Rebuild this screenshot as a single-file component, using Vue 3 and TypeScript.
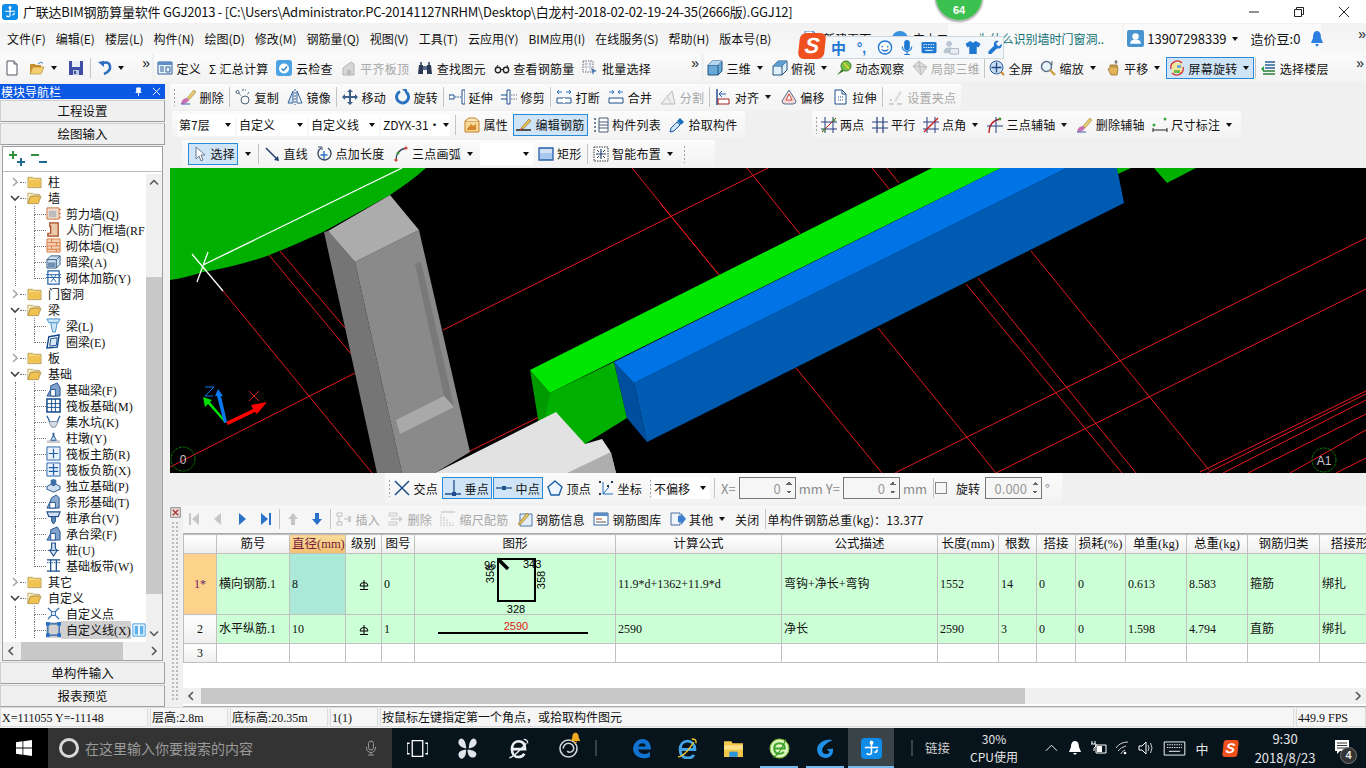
<template>
  <div class="app">
    <!-- icon sprite -->
    <svg class="sprite" width="0" height="0">
      <symbol id="new" viewBox="0 0 16 16"><path d="M3 1h7l3 3v11H3z" fill="#fff" stroke="#556"/><path d="M10 1v3h3" fill="#dde" stroke="#556"/></symbol>
      <symbol id="open" viewBox="0 0 16 16"><path d="M1 14V4h5l1 1h5v2H4l-3 7z" fill="#c9902f"/><path d="M1 14l3-7h11l-3 7z" fill="#f3cf72" stroke="#b07f22" stroke-width=".6"/><path d="M9 4q2-3 5-1" fill="none" stroke="#2f7fc8"/></symbol>
      <symbol id="save" viewBox="0 0 16 16"><path d="M1 1h14v14H1z" fill="#3d4fa6"/><path d="M4 1h8v6H4z" fill="#e8edf8"/><path d="M5 10h6v5H5z" fill="#bcc6e4"/><path d="M6 11h2v3H6z" fill="#3d4fa6"/></symbol>
      <symbol id="undo" viewBox="0 0 16 16"><path d="M5 3q7-2 8 3t-6 8" fill="none" stroke="#2a6fc0" stroke-width="2.6"/><path d="M1 2l6-1v6z" fill="#2a6fc0"/></symbol>
      <symbol id="def" viewBox="0 0 16 16"><path d="M1 2h14v12H1z" fill="#eef4fb" stroke="#2d5f99"/><path d="M1 2h14v3H1z" fill="#5b8ec6"/><path d="M3 7h4M3 9h4M3 11h4M9 7h4v5H9z" fill="none" stroke="#2d5f99"/></symbol>
      <symbol id="cloud" viewBox="0 0 16 16"><rect x="0" y="0" width="16" height="16" rx="3" fill="#4ba3e3"/><circle cx="8" cy="8.5" r="5" fill="#fff"/><path d="M5.5 8.5l2 2 3.500-4" fill="none" stroke="#2f86c9" stroke-width="1.500"/></symbol>
      <symbol id="level" viewBox="0 0 16 16"><path d="M2 15V8l8-6 3 2v11z" fill="#d6d6d6" stroke="#b5b5b5"/><path d="M6 15v-5h4v5z" fill="#bcbcbc"/></symbol>
      <symbol id="find" viewBox="0 0 16 16"><path d="M2 5h4v9H1zM10 5h4l1 9h-5z" fill="#2e3b55"/><path d="M3 2h2v3H3zM11 2h2v3h-2zM6 6h4v4H6z" fill="#5a6b8c"/></symbol>
      <symbol id="glass" viewBox="0 0 16 16"><circle cx="4" cy="10" r="2.700" fill="none" stroke="#222" stroke-width="1.400"/><circle cx="12" cy="10" r="2.700" fill="none" stroke="#222" stroke-width="1.400"/><path d="M6.500 9.500h3M2 8l2-3M14 8l-1-3" stroke="#222" fill="none"/></symbol>
      <symbol id="batch" viewBox="0 0 16 16"><path d="M1 1h10v11H1z" fill="#fff" stroke="#667" stroke-dasharray="1.500 1"/><path d="M1 4h10M1 7h10M4 1v11M8 1v11" stroke="#99a" stroke-width=".6"/><path d="M9 8l6 3-3 1-1 3z" fill="#4a78b0"/></symbol>
      <symbol id="cube" viewBox="0 0 16 16"><path d="M1 5l4-4h10v10l-4 4H1z" fill="#6aaad8" stroke="#23527f"/><path d="M1 5h10v10M11 5l4-4" fill="none" stroke="#23527f"/><path d="M1 5l4-4h10l-4 4z" fill="#b5d7ef"/></symbol>
      <symbol id="top" viewBox="0 0 16 16"><path d="M1 15V6l5-5h9v9l-5 5z" fill="#dff0fa" stroke="#23527f"/><path d="M1 6h9v9M10 6l5-5" fill="none" stroke="#23527f"/><path d="M6 1h9l-5 5H1z" fill="#5b9ed0"/></symbol>
      <symbol id="orbit" viewBox="0 0 16 16"><path d="M1 15l5-6 2 2z" fill="#3a7a2c"/><circle cx="10" cy="6" r="5" fill="#7cc143" stroke="#3a7a2c"/><path d="M8 3l5 6" stroke="#e6d23a" stroke-width="1.500"/></symbol>
      <symbol id="local" viewBox="0 0 16 16"><path d="M1 6l6-5 8 6-6 8z" fill="#dcdcdc" stroke="#bdbdbd"/><path d="M7 1l2 14M1 6l14 1" stroke="#bdbdbd"/></symbol>
      <symbol id="full" viewBox="0 0 16 16"><circle cx="7.500" cy="7.500" r="6.500" fill="#c9dcf2" stroke="#2d5f99"/><path d="M7.500 2.500v10M2.500 7.500h10" stroke="#1e4a85" stroke-width="1.300"/><path d="M12 12l3 3" stroke="#c98a2c" stroke-width="2"/></symbol>
      <symbol id="zoom" viewBox="0 0 16 16"><circle cx="6.500" cy="6.500" r="5" fill="#e9f3fb" stroke="#5c6f87" stroke-width="1.500"/><path d="M10 10l5 5" stroke="#c9a03c" stroke-width="2.400"/><path d="M12 1v4" stroke="#555"/></symbol>
      <symbol id="pan" viewBox="0 0 16 16"><path d="M3 9l2-1V5h7l1 4-1 6H6z" fill="#e2b35c" stroke="#94702c" stroke-width=".8"/><path d="M7 5v3M9 5v3M11 5v3" stroke="#94702c" stroke-width=".7"/><path d="M11 0v4M9.500 2h3" stroke="#556"/></symbol>
      <symbol id="rotate" viewBox="0 0 16 16"><path d="M3 3h10v10H3z" fill="#f2e69a"/><path d="M5 10h6v3H5z" fill="#71b84d"/><path d="M8 5h4v3H8z" fill="#6fa9dc"/><path d="M2 9a6.500 6.500 0 0 1 11-6M14 7a6.500 6.500 0 0 1-11 6" fill="none" stroke="#d6322c" stroke-width="1.300"/></symbol>
      <symbol id="floors" viewBox="0 0 16 16"><path d="M5 2h10M5 5h10M5 8h10" stroke="#2d5f99" stroke-width="1.400"/><path d="M3 11h12M3 14h12" stroke="#2d7f3a" stroke-width="1.400"/><path d="M1 9l3-3v6z" fill="#2e9c45"/></symbol>
      <symbol id="erase" viewBox="0 0 16 16"><path d="M7 9l7-8 2 2-7 8z" fill="#e7cb6d" stroke="#97803a" stroke-width=".6"/><path d="M1 15q1-6 6-6l2 2q-2 4-8 4z" fill="#cc6fb2"/><path d="M1 15h9" stroke="#3b5da8"/></symbol>
      <symbol id="copy" viewBox="0 0 16 16"><circle cx="2.500" cy="3" r="1.500" fill="none" stroke="#4c5f78"/><circle cx="10" cy="11" r="4" fill="none" stroke="#4c5f78"/><path d="M4 4l2 3M7 1h4M14 3l-2 3" stroke="#4c5f78" stroke-dasharray="2 1"/></symbol>
      <symbol id="mirror" viewBox="0 0 16 16"><path d="M6 2v12H1z" fill="#d8e5f3" stroke="#2d5f99"/><path d="M10 2v12h5z" fill="#fff" stroke="#2d5f99"/><path d="M8 0v16" stroke="#2d5f99" stroke-dasharray="2 1"/></symbol>
      <symbol id="move" viewBox="0 0 16 16"><path d="M8 0l3 3H9v4h4V5l3 3-3 3V9H9v4h2l-3 3-3-3h2V9H3v2L0 8l3-3v2h4V3H5z" fill="#3c5f8a"/></symbol>
      <symbol id="spin" viewBox="0 0 16 16"><path d="M6 2.500a6 6 0 1 0 6 .5" fill="none" stroke="#2d72c2" stroke-width="3"/><path d="M8 0h5v5z" fill="#2d72c2"/></symbol>
      <symbol id="extend" viewBox="0 0 16 16"><path d="M13 1h3v14h-3z" fill="#fff" stroke="#1f4f8c"/><path d="M0 6h5v4H0z" fill="#fff" stroke="#1f4f8c"/><path d="M6 8h6" stroke="#1f4f8c" stroke-dasharray="1.500 1"/></symbol>
      <symbol id="trim" viewBox="0 0 16 16"><path d="M6 1h3v14H6z" fill="#fff" stroke="#1f4f8c"/><path d="M0 6h6M0 10h6" stroke="#1f4f8c"/><path d="M10 6h6M10 10h6" stroke="#6a7a90" stroke-dasharray="1.500 1"/></symbol>
      <symbol id="break" viewBox="0 0 16 16"><path d="M1 9h14v5H1z" fill="#fff" stroke="#1f4f8c"/><path d="M8 9v5" stroke="#fff" stroke-width="2"/><path d="M1 3h5M15 3h-5M1 3l2-2M1 3l2 2M15 3l-2-2M15 3l-2 2" stroke="#2d72c2" fill="none"/></symbol>
      <symbol id="merge" viewBox="0 0 16 16"><path d="M1 9h14v5H1z" fill="#fff" stroke="#1f4f8c"/><path d="M1 3h5M15 3h-5M6 3L4 1M6 3L4 5M10 3l2-2M10 3l2 2" stroke="#2d72c2" fill="none"/></symbol>
      <symbol id="split" viewBox="0 0 16 16"><path d="M1 15L12 2l3 13z" fill="#eee" stroke="#bbb"/><path d="M7 6l4 9" stroke="#ccc"/></symbol>
      <symbol id="align" viewBox="0 0 16 16"><path d="M2 0v16" stroke="#1f3f8c" stroke-width="1.400"/><path d="M3 10h11v5H3z" fill="#fff" stroke="#a02020"/><path d="M11 5H4M4 5l3-3M4 5l3 3" stroke="#1f5fa8" fill="none"/></symbol>
      <symbol id="offset" viewBox="0 0 16 16"><path d="M8 1l7 11q0 3-3 3H4q-3 0-3-3z" fill="#f7d7d2" stroke="#56729a"/><path d="M8 5l3 6H5z" fill="#fff" stroke="#c9473a"/></symbol>
      <symbol id="stretch" viewBox="0 0 16 16"><path d="M2 1h7l4 4v10H2z" fill="#fff" stroke="#1f4f8c"/><path d="M9 1v4h4" fill="none" stroke="#1f4f8c"/><path d="M5 8h5M5 11h5" stroke="#1f4f8c" stroke-dasharray="1 1"/></symbol>
      <symbol id="grips" viewBox="0 0 16 16"><path d="M6 12l6-10 2 1-6 10z" fill="#ddd"/><path d="M1 15h5M9 15h5M2 11h2" stroke="#c4c4c4" stroke-width="1.500"/></symbol>
      <symbol id="prop" viewBox="0 0 16 16"><path d="M1 4h14v11H1z" fill="#f5d99a" stroke="#c77f1e"/><path d="M3 12l4-5 2 2 3-2v6H3z" fill="#d8862a"/><path d="M1 4l4-3h6l4 3" fill="#fbe9c3" stroke="#c77f1e"/></symbol>
      <symbol id="edit" viewBox="0 0 16 16"><path d="M0 13h15" stroke="#222" stroke-width="1.500"/><path d="M5 11L13 2l2 2-8 8z" fill="#e5c25c" stroke="#8a6a1f" stroke-width=".6"/><path d="M5 11l-1 2 3-1z" fill="#c33"/></symbol>
      <symbol id="list" viewBox="0 0 16 16"><path d="M1 2h2M1 6h2M1 10h2M1 14h2" stroke="#4b5d78" stroke-width="1.600" stroke-dasharray="2 1"/><path d="M6 1h9v14H6z" fill="#fff" stroke="#4b5d78"/><path d="M6 5h9M6 8h9M6 11h9" stroke="#4b5d78"/></symbol>
      <symbol id="pick" viewBox="0 0 16 16"><path d="M1 15l1-4 6-6 3 3-6 6z" fill="#cfe3f5" stroke="#1d5ca0"/><path d="M8 4l3-3 4 4-3 3z" fill="#1d6fc0"/></symbol>
      <symbol id="two" viewBox="0 0 16 16"><path d="M4 0v16M12 0v16M0 5h16M0 12h16" stroke="#273f7f" fill="none"/><path d="M1 15L15 1" stroke="#b02020"/><circle cx="3" cy="13" r="1.500" fill="#4c9a3a"/><circle cx="13" cy="3" r="1.500" fill="#4c9a3a"/></symbol>
      <symbol id="par" viewBox="0 0 16 16"><path d="M5 0v16M11 0v16M0 5h16M0 11h16" stroke="#273f7f" fill="none" stroke-width="1.200"/></symbol>
      <symbol id="ang" viewBox="0 0 16 16"><path d="M4 0v16M12 0v16M0 5h16M0 12h16" stroke="#273f7f" fill="none"/><path d="M1 15L15 1" stroke="#d02020" stroke-width="1.500"/></symbol>
      <symbol id="arcx" viewBox="0 0 16 16"><path d="M2 16Q2 4 13 2" fill="none" stroke="#c02020" stroke-width="1.300"/><path d="M9 0v16M0 9h16" stroke="#273f7f" fill="none"/><circle cx="13" cy="2" r="1.400" fill="#3a9a3a"/></symbol>
      <symbol id="dim" viewBox="0 0 16 16"><path d="M1 11v4M15 11v4M1 13h14" stroke="#222" fill="none"/><circle cx="2" cy="8" r="1.500" fill="#3aa63a"/><circle cx="13" cy="2" r="1.500" fill="#3aa63a"/></symbol>
      <symbol id="cursor" viewBox="0 0 16 16"><path d="M5 1v12l3-3 2 5 2-1-2-5h4z" fill="#fff" stroke="#6b7a90"/></symbol>
      <symbol id="line" viewBox="0 0 16 16"><path d="M2 2l11 11" stroke="#233f6f" stroke-width="1.500"/><path d="M15 15l-5-1 4-4z" fill="#233f6f"/></symbol>
      <symbol id="plen" viewBox="0 0 16 16"><path d="M5 2a6.500 6.500 0 1 0 7 0" fill="none" stroke="#3e4f68" stroke-width="1.400"/><path d="M8 5v8M4.500 9h7" stroke="#2d72c2" stroke-width="1.400"/><path d="M2 1h4v3" fill="none" stroke="#3e4f68"/></symbol>
      <symbol id="arc" viewBox="0 0 16 16"><path d="M3 14Q3 4 13 2" fill="none" stroke="#39435a" stroke-width="1.300"/><circle cx="3" cy="14" r="1.600" fill="#d0473a"/><circle cx="5" cy="7" r="1.500" fill="#3a9a3a"/><circle cx="13" cy="2" r="1.600" fill="#d0473a"/></symbol>
      <symbol id="rect" viewBox="0 0 16 16"><path d="M1 2h14v12H1z" fill="#a9c8ee" stroke="#2d5faa" stroke-width="1.300"/><path d="M2 3h12v4H2z" fill="#d2e3f7"/></symbol>
      <symbol id="smart" viewBox="0 0 16 16"><path d="M1 1h14v14H1z" fill="#fff" stroke="#333" stroke-dasharray="1.500 1"/><path d="M8 3v10M3 8h10" stroke="#233f6f" stroke-width="1.200"/><path d="M4 4l2 2M12 4l-2 2M4 12l2-2M12 12l-2-2" stroke="#333"/></symbol>
      <symbol id="cross" viewBox="0 0 16 16"><path d="M1 1l14 14M15 1L1 15" stroke="#1f4f8c" stroke-width="1.500"/></symbol>
      <symbol id="perp" viewBox="0 0 16 16"><path d="M9 0v14M0 14h16" stroke="#1f4f8c" stroke-width="1.300"/><path d="M7 12h4v4H7z" fill="#1f4f8c"/></symbol>
      <symbol id="mid" viewBox="0 0 16 16"><path d="M0 8h16" stroke="#1f4f8c" stroke-width="1.300"/><path d="M6 6h4v4H6z" fill="#1f4f8c"/></symbol>
      <symbol id="vertex" viewBox="0 0 16 16"><path d="M8 1l7 6-3 8H4L1 7z" fill="#eef6ff" stroke="#1f5fa8" stroke-width="1.400"/></symbol>
      <symbol id="coord" viewBox="0 0 16 16"><path d="M5 2v12h10M5 14l6-7" stroke="#1f6fc0" fill="none"/><path d="M1 1h2v2H1zM13 1h2v2h-2zM1 13h2v2H1zM9 5h2v2H9z" fill="#234"/></symbol>
      <symbol id="close-x" viewBox="0 0 16 16"><path d="M1 1h14v14H1z" fill="#e8d9d6" stroke="#666"/><path d="M4 4l8 8M12 4l-8 8" stroke="#a0302a" stroke-width="1.700"/></symbol>
      <symbol id="first" viewBox="0 0 16 16"><path d="M3 2h2v12H3zM13 2v12L6 8z" fill="#c6c6c6"/></symbol>
      <symbol id="prev" viewBox="0 0 16 16"><path d="M11 2v12L4 8z" fill="#c6c6c6"/></symbol>
      <symbol id="next" viewBox="0 0 16 16"><path d="M5 2v12l7-6z" fill="#2a72c8"/></symbol>
      <symbol id="last" viewBox="0 0 16 16"><path d="M3 2v12l7-6zM11 2h2v12h-2z" fill="#2a72c8"/></symbol>
      <symbol id="up" viewBox="0 0 16 16"><path d="M8 2l5 6h-3v6H6V8H3z" fill="#c6c6c6"/></symbol>
      <symbol id="down" viewBox="0 0 16 16"><path d="M8 14l5-6h-3V2H6v6H3z" fill="#2a72c8"/></symbol>
      <symbol id="ins" viewBox="0 0 16 16"><path d="M1 2h5v3H1zM1 11h5v3H1z" fill="#fff" stroke="#bbb"/><path d="M3 5v6M8 8h4" stroke="#bbb"/><path d="M12 5h3v6h-3z" fill="#ccc"/></symbol>
      <symbol id="del" viewBox="0 0 16 16"><path d="M1 2h8v3H1zM1 11h8v3H1z" fill="#eee" stroke="#ccc"/><path d="M3 8h8" stroke="#bbb"/><path d="M11 5l4 3-4 3z" fill="#ccc"/></symbol>
      <symbol id="scale" viewBox="0 0 16 16"><path d="M1 15V3M4 15V6M7 15V8M10 15v-5M13 15v-3" stroke="#bbb" stroke-dasharray="1.500 1"/><path d="M1 1h14" stroke="#bbb"/></symbol>
      <symbol id="info" viewBox="0 0 16 16"><path d="M3 3h12v12H3z" fill="#e4eef9" stroke="#4c78ad"/><path d="M1 13l9-11 2 2-9 10z" fill="#e4c25c" stroke="#8a6a1f" stroke-width=".6"/></symbol>
      <symbol id="lib" viewBox="0 0 16 16"><path d="M1 2h14v12H1z" fill="#fff" stroke="#2d5f99"/><path d="M1 2h14v3H1z" fill="#5b8ec6"/><path d="M3 8h6" stroke="#b04a2a"/><path d="M3 11h10" stroke="#555"/></symbol>
      <symbol id="other" viewBox="0 0 16 16"><path d="M1 2h9v12H1z" fill="#eef4fb" stroke="#4c6f9a"/><path d="M8 5h3V2l5 6-5 6v-3H8z" fill="#3a7fd0"/></symbol>
      <symbol id="grade" viewBox="0 0 12 12"><path d="M2 7a4 3.500 0 0 1 8 0z" fill="none" stroke="#000"/><path d="M6 1v9M2 10.500h8" stroke="#000"/></symbol>
      <symbol id="chev-r" viewBox="0 0 10 10"><path d="M3 1l4 4-4 4" fill="none" stroke="#a8a8a8" stroke-width="1.600"/></symbol>
      <symbol id="chev-d" viewBox="0 0 10 10"><path d="M1 3l4 4 4-4" fill="none" stroke="#444" stroke-width="1.600"/></symbol>
      <symbol id="folder" viewBox="0 0 16 14"><path d="M1 2h5l1 1h8v10H1z" fill="#f6d779" stroke="#aa8a44" stroke-width=".8"/><path d="M2 5h12v7H2z" fill="#f0c350"/></symbol>
      <symbol id="folder-o" viewBox="0 0 16 14"><path d="M1 13V2h5l1 1h6v2H4l-3 8z" fill="#fff3c8" stroke="#aa8a44" stroke-width=".8"/><path d="M1 13l3-8h11l-3 8z" fill="#f0c350" stroke="#aa8a44" stroke-width=".8"/></symbol>
      <symbol id="t-shear" viewBox="0 0 16 16"><path d="M1 2h13v12H1z" fill="#f4ddd0" stroke="#c9703a"/><path d="M3 5h8v7H3z" fill="#bcbcbc"/><path d="M14 4h2M14 8h2M14 12h2" stroke="#c9703a"/></symbol>
      <symbol id="t-door" viewBox="0 0 16 16"><path d="M4 1h9v14H2v-3h3V5H4z" fill="#e9c9a8" stroke="#a8461e" stroke-width="1.300"/></symbol>
      <symbol id="t-brick" viewBox="0 0 16 16"><path d="M1 1h14v14H1z" fill="#f6d3b8" stroke="#d47a3e"/><path d="M1 5h14M1 8.500h14M1 12h14M6 1v4M11 5v3.500M6 8.500V12M11 12v3" stroke="#d47a3e"/></symbol>
      <symbol id="t-hid" viewBox="0 0 16 16"><path d="M1 6l4-4h10v9l-4 4H1z" fill="#cfe2f3" stroke="#33597f"/><path d="M1 6h10v9M11 6l4-4" fill="none" stroke="#33597f"/><path d="M2 9h8v5H2z" fill="#6d8fb2"/></symbol>
      <symbol id="t-add" viewBox="0 0 16 16"><path d="M2 1h12v14H2z" fill="#fff" stroke="#1f5fa8" stroke-width="1.300"/><path d="M0 5h16M0 8h16M5 5l6 8M11 5l-6 8" stroke="#1f5fa8"/></symbol>
      <symbol id="t-beam" viewBox="0 0 16 16"><path d="M1 1h14l-2 4h-1l-2 10H7L5 5H3z" fill="#cfe6f7" stroke="#3d8ed0"/><path d="M5 5h7" stroke="#3d8ed0"/></symbol>
      <symbol id="t-ring" viewBox="0 0 16 16"><path d="M3 3l11-2-2 13-11 1z" fill="#fff" stroke="#134a8f" stroke-width="1.500"/><path d="M5 5l7-1-1 8-7 1z" fill="#dbe9f7" stroke="#134a8f"/></symbol>
      <symbol id="t-fbeam" viewBox="0 0 16 16"><path d="M1 15l4-7V4l7-3 3 5v9z" fill="#7fa4cb" stroke="#1f4f8c"/><path d="M5 15V8h5v7z" fill="#fff" stroke="#1f4f8c"/></symbol>
      <symbol id="t-raft" viewBox="0 0 16 16"><path d="M1 1h14v14H1z" fill="#fff" stroke="#134a8f" stroke-width="1.600"/><path d="M1 6h14M1 10h14M6 1v14M10 1v14" stroke="#134a8f"/></symbol>
      <symbol id="t-pit" viewBox="0 0 16 16"><path d="M1 2l3 6h8l3-6" fill="none" stroke="#1f5fa8" stroke-width="1.300"/><path d="M3 8h10l-3 6H6z" fill="#d7dde6" stroke="#7b8ca2"/></symbol>
      <symbol id="t-pier" viewBox="0 0 16 16"><path d="M1 11h14v3H1z" fill="#cbcbcb"/><path d="M5 11l2-4h2l2 4z" fill="#c2d7ee" stroke="#2d5f99"/><path d="M7 3h2v4H7z" fill="#2d5f99"/></symbol>
      <symbol id="t-main" viewBox="0 0 16 16"><path d="M1 1h14v14H1z" fill="#eaf2fb" stroke="#1f5fa8"/><path d="M8 3v10M3 8h10" stroke="#1f5fa8" stroke-width="1.300"/></symbol>
      <symbol id="t-neg" viewBox="0 0 16 16"><path d="M1 1h14v14H1z" fill="#eaf2fb" stroke="#1f5fa8"/><path d="M3 6h10M3 10h10M8 2v12" stroke="#1f5fa8" stroke-width="1.300"/></symbol>
      <symbol id="t-iso" viewBox="0 0 16 16"><path d="M1 9l7-4 7 4v3l-7 3-7-3z" fill="#cfe0f0" stroke="#1f4f8c"/><path d="M5 7V2l3-1 3 1v5l-3 2z" fill="#3d6ea5"/></symbol>
      <symbol id="t-strip" viewBox="0 0 16 16"><path d="M1 15l3-6 2-5 5-3 3 3v11z" fill="#8cabd0" stroke="#1f4f8c"/><path d="M4 15V9h6v6z" fill="#fff" stroke="#1f4f8c"/></symbol>
      <symbol id="t-cap" viewBox="0 0 16 16"><path d="M1 2h14l-2 5H3z" fill="#cfe0f0" stroke="#1f4f8c" stroke-width="1.200"/><path d="M6 7h4v5l-2 3-2-3z" fill="#5f87b3" stroke="#1f4f8c"/></symbol>
      <symbol id="t-pile" viewBox="0 0 16 16"><path d="M6 1h4v6l2 2-4 6-4-6 2-2z" fill="#cfe0f0" stroke="#1f4f8c" stroke-width="1.200"/><path d="M2 9h12" stroke="#1f4f8c"/></symbol>
      <symbol id="t-band" viewBox="0 0 16 16"><path d="M1 2h14M1 14h14M5 2v12M11 2v12" stroke="#134a8f" stroke-width="1.300"/><path d="M1 5h14" stroke="#134a8f" stroke-dasharray="1.500 1"/></symbol>
      <symbol id="t-point" viewBox="0 0 16 16"><path d="M2 2l12 12M14 2L2 14" stroke="#1f5fa8" stroke-width="1.300"/><path d="M6 6h4v4H6z" fill="#fff" stroke="#1f5fa8"/></symbol>
      <symbol id="t-line" viewBox="0 0 16 16"><path d="M2 2h12v12H2z" fill="none" stroke="#1f5fa8" stroke-width="1.300"/><path d="M0 0h4v4H0zM12 0h4v4h-4zM0 12h4v4H0zM12 12h4v4h-4z" fill="#2a72c8"/></symbol>
      <symbol id="t-cols" viewBox="0 0 16 16"><path d="M1 1h14v14H1z" fill="#fff" stroke="#2a8fe0"/><path d="M3 3h4v10H3zM9 3h4v10H9z" fill="#5db0ee"/></symbol>
      <symbol id="plus-g" viewBox="0 0 16 16"><path d="M3 0h2v3h3v2H5v3H3V5H0V3h3z" fill="#2f8f3a"/><path d="M11 7h2v3h3v2h-3v3h-2v-3H8v-2h3z" fill="#1f6a8c"/></symbol>
      <symbol id="minus-g" viewBox="0 0 16 16"><path d="M0 3h8v2H0z" fill="#2f8f3a"/><path d="M8 10h8v2H8z" fill="#1f6a8c"/></symbol>
      <symbol id="win" viewBox="0 0 16 16"><path d="M0 2.200L6.500 1.300V7.600H0zM7.300 1.200L16 0V7.600H7.300zM0 8.400H6.500V14.700L0 13.800zM7.300 8.400H16V16L7.300 14.800z" fill="#fff"/></symbol>
      <symbol id="mic" viewBox="0 0 16 16"><rect x="5.500" y="1" width="5" height="9" rx="2.500" fill="none" stroke="#999"/><path d="M3.500 7v1a4.500 4.500 0 0 0 9 0V7M8 13v2M5 15h6" fill="none" stroke="#999"/></symbol>
      <symbol id="taskview" viewBox="0 0 16 16"><path d="M4 2h8v12H4zM2 4H0v8h2M14 4h2v8h-2" fill="none" stroke="#fff"/></symbol>
      <symbol id="fan" viewBox="0 0 16 16"><path d="M7 8C1 7 0 3 2 1s5 1 5 7zM9 8c0-6 3-9 5-7s1 6-5 7zM8 9c6 0 8 3 6 5s-6 1-6-5zM7 9c0 6-3 8-5 6s-1-6 5-6z" fill="#dfe4e8"/></symbol>
      <symbol id="ie-w" viewBox="0 0 16 16"><path d="M3 8.500h10c0-4-2-6-5-6s-5 2.500-5 6 2 6 5 6c2 0 3.500-1 4.500-2.500" fill="none" stroke="#eef1f3" stroke-width="2"/><path d="M1 15q3 0 13-11M12 1q3 0 3 3" fill="none" stroke="#eef1f3"/></symbol>
      <symbol id="swirl" viewBox="0 0 16 16"><circle cx="8" cy="8" r="6.500" fill="none" stroke="#d5d9dc" stroke-width="1.200"/><path d="M4 8a4 4 0 0 1 8 0 3 3 0 0 1-5 2" fill="none" stroke="#d5d9dc" stroke-width="1.200"/></symbol>
      <symbol id="bell-o" viewBox="0 0 16 16"><path d="M8 1c3 0 4 3 4 6l2 4H2l2-4c0-3 1-6 4-6z" fill="#f0a820"/><path d="M6 12h4l-2 3z" fill="#f0a820"/></symbol>
      <symbol id="edge" viewBox="0 0 20 20"><path d="M2 11C2 5 6 1 11 1c5 0 8 4 8 10H7c0 4 7 6 11 2v5c-6 3-15 1-16-7zM7 8h7c0-4-6-4-7 0z" fill="#1274d0"/></symbol>
      <symbol id="ie" viewBox="0 0 20 20"><path d="M4 11h13c0-5-3-8-7-8s-7 3-7 8 3 8 7 8c3 0 5-1 6-3" fill="none" stroke="#42a5e8" stroke-width="2.800"/><path d="M1 18q6 0 15-14M14 1q5 0 4 4" fill="none" stroke="#f0c52c" stroke-width="1.300"/></symbol>
      <symbol id="explorer" viewBox="0 0 20 20"><path d="M1 3h7l1 2h10v13H1z" fill="#f3c74a"/><path d="M1 7h18v4H1z" fill="#fbe08a"/><path d="M6 13h8v5H6z" fill="#2d93d8"/></symbol>
      <symbol id="green-e" viewBox="0 0 20 20"><circle cx="10" cy="10" r="9" fill="#dff5c0" stroke="#7fbf3a"/><path d="M5 10h10c0-3-2-5-5-5s-5 2-5 5 2 5 5 5c2 0 3.500-1 4-2" fill="none" stroke="#3fa52c" stroke-width="2"/><path d="M4 19q8-6 12-18" fill="none" stroke="#2b8f1f"/></symbol>
      <symbol id="gswirl" viewBox="0 0 20 20"><path d="M17 2C9 0 2 5 2 11c0 5 4 8 8 8 5 0 8-4 7-9l-6 1 3 2c-1 3-6 3-7 0-1-4 3-8 10-11z" fill="#1f8fe8"/></symbol>
      <symbol id="gld" viewBox="0 0 22 22"><rect width="22" height="22" rx="4" fill="#0f8be8"/><path d="M11 3v13a3 3 0 0 1-5 0M4 10h14M14 15a3 3 0 0 0 3-3" fill="none" stroke="#fff" stroke-width="1.600"/><circle cx="11" cy="5" r="2" fill="#fff"/></symbol>
      <symbol id="bell" viewBox="0 0 16 16"><path d="M8 1c3 0 4 3 4 6l2 5H2l2-5c0-3 1-6 4-6zM6 13h4l-2 2z" fill="#fff"/></symbol>
      <symbol id="batt" viewBox="0 0 16 16"><path d="M5 5h10v8H5z" fill="none" stroke="#fff"/><path d="M6 6h5v6H6z" fill="#fff"/><path d="M1 1v3M4 1v3M0 4h5v2l-2 2v3" fill="none" stroke="#fff"/></symbol>
      <symbol id="wifi" viewBox="0 0 16 16"><path d="M1 8q4-6 12-6M3 11q3-4 8-5M6 14q1-3 4-4" fill="none" stroke="#ccc"/><circle cx="10" cy="13" r="1.300" fill="#fff"/></symbol>
      <symbol id="vol" viewBox="0 0 16 16"><path d="M1 6h3l4-4v12l-4-4H1z" fill="none" stroke="#fff"/><path d="M10 5q2 3 0 6M12.500 3q3 5 0 10" fill="none" stroke="#ccc"/></symbol>
      <symbol id="kb" viewBox="0 0 24 16"><path d="M1 1h22v14H1z" fill="none" stroke="#fff"/><path d="M4 4h16M4 7h16" stroke="#fff" stroke-dasharray="1.500 1"/><path d="M6 11h12" stroke="#fff"/></symbol>
      <symbol id="note" viewBox="0 0 16 16"><path d="M1 1h14v11H6l-3 3v-3H1z" fill="#fff"/><path d="M3 4h10M3 6.500h10M3 9h10" stroke="#333"/></symbol>
      <symbol id="avatar" viewBox="0 0 16 16"><rect width="16" height="16" rx="2" fill="#4a95d0"/><circle cx="8" cy="6" r="3" fill="#fff"/><path d="M3 13c0-3 2-4 5-4s5 1 5 4z" fill="#fff"/></symbol>
      <symbol id="bell-b" viewBox="0 0 16 16"><path d="M8 0c3 0 4 3 4 7l2 5H2l2-5c0-4 1-7 4-7zM6 13h4l-2 3z" fill="#2b7fe0"/></symbol>
      <symbol id="doc-plus" viewBox="0 0 16 16"><path d="M2 0h8l4 4v12H2z" fill="#fff" stroke="#3a7fc8"/><path d="M10 0v4h4" fill="none" stroke="#3a7fc8"/></symbol>
      <symbol id="globe" viewBox="0 0 16 16"><circle cx="8" cy="8" r="8" fill="#3a93e0"/><circle cx="5" cy="7" r="1.500" fill="#fff"/><circle cx="11" cy="7" r="1.500" fill="#fff"/></symbol>
      <symbol id="smile" viewBox="0 0 16 16"><circle cx="8" cy="8" r="7" fill="#fff" stroke="#1f78d1" stroke-width="1.500"/><path d="M5 6v2M11 6v2M4.500 10q3.500 3.500 7 0" fill="none" stroke="#1f78d1" stroke-width="1.300"/></symbol>
      <symbol id="s-mic" viewBox="0 0 16 16"><rect x="5" y="0" width="6" height="11" rx="3" fill="#1f78d1"/><path d="M3 7a5 5 0 0 0 10 0M8 12v3M5 15.500h6" fill="none" stroke="#1f78d1" stroke-width="1.300"/></symbol>
      <symbol id="s-kb" viewBox="0 0 16 16"><rect y="2" width="16" height="12" rx="1.500" fill="#1f78d1"/><path d="M2 5h12M2 8h12" stroke="#fff" stroke-dasharray="1.500 1"/><path d="M4 11h8" stroke="#fff"/></symbol>
      <symbol id="s-user" viewBox="0 0 16 16"><circle cx="6" cy="4" r="3" fill="#b9c6d2"/><path d="M0 14c0-4 2-6 6-6s6 2 6 6z" fill="#b9c6d2"/><path d="M7 9h9v6H7z" fill="#e8eef3" stroke="#a9b6c2"/></symbol>
      <symbol id="s-shirt" viewBox="0 0 16 16"><path d="M5 1L0 4l2 4 2-1v8h8V7l2 1 2-4-5-3-3 2z" fill="#1f78d1"/></symbol>
      <symbol id="s-tool" viewBox="0 0 16 16"><path d="M15 4l-3 3-3-3 3-3c-3-1-6 1-5 5L1 12v3h3l6-6c4 1 6-2 5-5z" fill="#1f78d1"/></symbol>
    </svg>

    <header class="titlebar">
      <svg class="ico app-ico"><use href="#gld" /></svg>
      <span class="title-text">广联达BIM钢筋算量软件 GGJ2013 - [C:\Users\Administrator.PC-20141127NRHM\Desktop\白龙村-2018-02-02-19-24-35(2666版).GGJ12]</span>
      <div class="win-btns">
        <svg viewBox="0 0 12 12"><path d="M1 6h10" stroke="#222" /></svg>
        <svg viewBox="0 0 12 12"><path d="M1.500 3.500h7v7h-7zM3.500 3.500v-2h7v7h-2" fill="none" stroke="#222" /></svg>
        <svg viewBox="0 0 12 12"><path d="M1 1l10 10M11 1L1 11" stroke="#222" /></svg>
      </div>
    </header>

    <nav class="menubar">
      <span v-for="m in menus" :key="m" class="menu-item">{{ m }}</span>
      <div class="news">
        <svg class="ico"><use href="#doc-plus" /></svg><span>新建页面</span>
        <svg class="ico globe"><use href="#globe" /></svg><span>广小二</span>
      </div>
      <div class="tip">为什么识别墙时门窗洞..</div>
      <div class="account">
        <svg class="ico avatar"><use href="#avatar" /></svg>
        <span>13907298339</span><i class="caret" />
        <span class="beans">造价豆:0</span>
        <svg class="ico"><use href="#bell-b" /></svg>
      </div>
      <span class="more">»</span>
    </nav>

    <!-- floating widgets -->
    <div class="badge">64</div>
    <div class="ime">
      <span class="ime-logo">S</span>
      <span class="ime-zh">中</span>
      <span class="ime-dot">°,</span>
      <svg v-for="s in imeIcons" :key="s" class="ico"><use :href="`#${s}`" /></svg>
    </div>

    <div class="tool-row row-top">
      <div class="tool-block quick">
        <ToolItem v-for="(t, i) in quickTools" :key="i" :item="t" />
        <span class="more">»</span>
      </div>
      <div class="tool-block mid-tools">
        <ToolItem v-for="(t, i) in mainTools" :key="i" :item="t" />
        <span class="more">»</span>
      </div>
      <div class="tool-block view-tools">
        <ToolItem v-for="(t, i) in viewTools" :key="i" :item="t" />
        <span class="more end">»</span>
      </div>
    </div>

    <div class="workspace">
      <aside class="nav">
        <div class="nav-title">
          <span>模块导航栏</span>
          <span class="nav-ctl">
            <svg viewBox="0 0 10 10"><path d="M3 1h4v4l1 1H2l1-1zM5 6v4" fill="#fff" stroke="#fff" /></svg>
            <svg viewBox="0 0 10 10"><path d="M1 1l8 8M9 1L1 9" stroke="#fff" /></svg>
          </span>
        </div>
        <div class="nav-btn">工程设置</div>
        <div class="nav-btn">绘图输入</div>
        <div class="nav-box">
          <div class="nav-tools">
            <svg class="ico"><use href="#plus-g" /></svg>
            <svg class="ico"><use href="#minus-g" /></svg>
          </div>
          <div class="tree-wrap">
            <ul class="tree">
              <li
                v-for="n in tree"
                :key="n.label"
                :class="n.icon ? 'leaf' : 'group'"
              >
                <template v-if="n.icon">
                  <i class="trunk" />
                  <i class="stub" :class="{ last: n.last }" />
                  <span class="leaf-ico" :class="{ picked: n.picked }">
                    <svg class="ico"><use :href="`#${n.icon}`" /></svg>
                  </span>
                  <span class="leaf-label" :class="{ picked: n.picked }">{{ n.label }}</span>
                  <svg v-if="n.picked" class="ico cols"><use href="#t-cols" /></svg>
                </template>
                <template v-else>
                  <svg class="chev"><use :href="n.open ? '#chev-d' : '#chev-r'" /></svg>
                  <i class="gstub" />
                  <svg class="ico fold"><use :href="n.open ? '#folder-o' : '#folder'" /></svg>
                  <span class="group-label">{{ n.label }}</span>
                </template>
              </li>
            </ul>
            <div class="vscroll">
              <svg viewBox="0 0 10 10" class="sc-arrow"><path d="M1 7l4-4 4 4" fill="none" stroke="#555" stroke-width="1.500" /></svg>
              <div class="vtrack"><div class="vthumb" /></div>
              <svg viewBox="0 0 10 10" class="sc-arrow"><path d="M1 3l4 4 4-4" fill="none" stroke="#555" stroke-width="1.500" /></svg>
            </div>
          </div>
          <div class="hscroll nav-h">
            <svg viewBox="0 0 10 10"><path d="M7 1L3 5l4 4" fill="none" stroke="#555" stroke-width="1.600" /></svg>
            <div class="htrack"><div class="hthumb" /></div>
            <svg viewBox="0 0 10 10"><path d="M3 1l4 4-4 4" fill="none" stroke="#555" stroke-width="1.600" /></svg>
          </div>
        </div>
        <div class="nav-btn">单构件输入</div>
        <div class="nav-btn">报表预览</div>
      </aside>

      <main class="main">
        <div class="tool-row row-edit">
          <div class="tool-block">
            <i class="grip" />
            <ToolItem v-for="(t, i) in editTools" :key="i" :item="t" />
          </div>
        </div>
        <div class="tool-row row-attr">
          <div class="tool-block">
            <ToolItem v-for="(t, i) in attrTools" :key="i" :item="t" />
          </div>
          <div class="tool-block axis">
            <i class="grip" />
            <ToolItem v-for="(t, i) in axisTools" :key="i" :item="t" />
          </div>
        </div>
        <div class="tool-row row-draw">
          <div class="tool-block">
            <ToolItem v-for="(t, i) in drawTools" :key="i" :item="t" />
            <i class="grip" />
          </div>
        </div>

        <svg class="canvas" viewBox="170 168 1196 305" preserveAspectRatio="none">
          <rect x="170" y="168" width="1196" height="305" fill="#000" />
          <path d="M170 168H426Q410 182 390 195L323 232Q295 245 267 256Q235 267 203 272Q185 278 170 280Z" fill="#00b000" />
          <g stroke="#e8181c" stroke-width="1" fill="none">
            <path v-for="(l, i) in redLines" :key="i" :d="l" />
          </g>
          <path d="M203 265L402 168M192 254L223 291M208 252L197 282" stroke="#fff" stroke-width="1.300" fill="none" />
          <!-- column -->
          <path d="M324 232L328 231L355 262L402 473H377Z" fill="#757575" />
          <path d="M355 262L419 230L470 452L435 473H402Z" fill="#8a8a8a" />
          <path d="M328 231L390 195L419 230L355 262Z" fill="#acacac" />
          <path d="M415 264L421 262L454 407L444 396Z" fill="#797979" />
          <path d="M396 420L444 396L454 407L400 434Z" fill="#a9a9a9" />
          <!-- green and blue beams -->
          <path d="M530 370L550 393L555 420L539 425Z" fill="#009a00" />
          <path d="M550 393L614 362L627 418L585 444L560 440L545 420Z" fill="#00b000" />
          <path d="M530 370L932 168H1001L550 393Z" fill="#00e600" />
          <path d="M614 362L634 383L647 442L627 418Z" fill="#004f9e" />
          <path d="M634 383L1067 168H1117L1124 203L647 442Z" fill="#005cb3" />
          <path d="M614 362L1001 168H1067L634 383Z" fill="#0073e6" />
          <path d="M1117 168L1118 174L1131 168Z" fill="#00b000" />
          <path d="M1154 168L1167 183L1196 168Z" fill="#00b000" />
          <!-- pale slab -->
          <path d="M435 473L556 412L585 444L602 439L610 451L616 473Z" fill="#e2e2e2" />
          <path d="M567 473L611 452L616 473Z" fill="#aeaeae" />
          <!-- axis gizmo -->
          <path d="M226 422L253 409L251 405L267 402L257 414L255 412L228 425Z" fill="#ff0000" />
          <path d="M225 423L208 404L205 407L203 397L212 400L210 402L226 421Z" fill="#00e000" />
          <path d="M224 423L217 396L215 396L218 389L223 396L221 396L227 422Z" fill="#0a78f0" />
          <path d="M249 391L259 401M259 391L249 401" stroke="#d02020" fill="none" />
          <path d="M205 387H214L205 396H213" stroke="#0a78f0" fill="none" />
          <circle cx="183" cy="459" r="12" fill="none" stroke="#0a7a0a" stroke-dasharray="3 1" />
          <text x="183" y="464" class="axis-label">0</text>
          <circle cx="1324" cy="460" r="12" fill="none" stroke="#0a7a0a" stroke-dasharray="3 1" />
          <text x="1324" y="465" class="axis-label">A1</text>
        </svg>

        <div class="snapbar">
          <div class="tool-block snap">
            <i class="grip" />
            <ToolItem v-for="(t, i) in snapTools" :key="i" :item="t" />
            <i class="grip" />
            <ToolItem :item="{ sel: '不偏移', w: 58 }" />
            <i class="sep" />
            <span class="dim-text">X=</span>
            <span class="spin"><b>0</b><i class="spin-arrows" /></span>
            <span class="dim-text">mm</span>
            <span class="dim-text y">Y=</span>
            <span class="spin"><b>0</b><i class="spin-arrows" /></span>
            <span class="dim-text">mm</span>
            <i class="sep" />
            <i class="check" />
            <span class="rot-label">旋转</span>
            <span class="spin"><b>0.000</b><i class="spin-arrows" /></span>
            <span class="dim-text">°</span>
          </div>
        </div>

        <section class="rebar">
          <div class="rebar-side">
            <svg class="close-ico"><use href="#close-x" /></svg>
            <i class="side-dots" />
          </div>
          <div class="rebar-body">
            <div class="rebar-tools">
              <ToolItem v-for="(t, i) in rebarTools" :key="i" :item="t" />
              <span class="total">单构件钢筋总重(kg)：13.377</span>
            </div>
            <div class="table-box">
              <div class="table-clip">
                <table class="grid">
                  <colgroup>
                    <col v-for="(w, i) in colWidths" :key="i" :style="{ width: w + 'px' }" />
                  </colgroup>
                  <thead>
                    <tr>
                      <th />
                      <th v-for="h in headers" :key="h" :class="{ hot: h === '直径(mm)' }">{{ h }}</th>
                    </tr>
                  </thead>
                  <tbody>
                    <tr class="r1">
                      <th class="hot-row">1*</th>
                      <td>横向钢筋.1</td><td class="teal freeze">8</td><td class="c"><svg class="grade"><use href="#grade" /></svg></td><td>0</td>
                      <td class="fig">
                        <svg viewBox="0 0 200 60">
                          <path d="M83 5H120V47H83Z" fill="none" stroke="#000" stroke-width="2" />
                          <path d="M83 5L93 15" stroke="#000" stroke-width="3.500" />
                          <text x="101" y="59" class="fig-t" text-anchor="middle">328</text>
                          <text x="108" y="14" class="fig-t">343</text>
                          <text transform="translate(130 26) rotate(-90)" class="fig-t" text-anchor="middle">358</text>
                          <text transform="translate(79 20) rotate(-90)" class="fig-t" text-anchor="middle">358</text>
                          <text x="69" y="15" class="fig-t">96</text>
                        </svg>
                      </td>
                      <td>11.9*d+1362+11.9*d</td><td>弯钩+净长+弯钩</td><td>1552</td><td>14</td><td>0</td><td>0</td><td>0.613</td><td>8.583</td><td>箍筋</td><td>绑扎</td>
                    </tr>
                    <tr class="r2">
                      <th>2</th>
                      <td>水平纵筋.1</td><td class="freeze">10</td><td class="c"><svg class="grade"><use href="#grade" /></svg></td><td>1</td>
                      <td class="fig">
                        <svg viewBox="0 0 200 28">
                          <path d="M23 18H173" stroke="#000" stroke-width="2" />
                          <text x="101" y="15" class="fig-t red" text-anchor="middle">2590</text>
                        </svg>
                      </td>
                      <td>2590</td><td>净长</td><td>2590</td><td>3</td><td>0</td><td>0</td><td>1.598</td><td>4.794</td><td>直筋</td><td>绑扎</td>
                    </tr>
                    <tr class="r3">
                      <th>3</th>
                      <td /><td class="freeze" /><td /><td /><td /><td /><td /><td /><td /><td /><td /><td /><td /><td /><td />
                    </tr>
                  </tbody>
                </table>
              </div>
              <div class="hscroll grid-h">
                <svg viewBox="0 0 10 10"><path d="M7 1L3 5l4 4" fill="none" stroke="#555" stroke-width="1.600" /></svg>
                <div class="htrack"><div class="hthumb" /></div>
                <svg viewBox="0 0 10 10"><path d="M3 1l4 4-4 4" fill="none" stroke="#555" stroke-width="1.600" /></svg>
              </div>
            </div>
          </div>
        </section>
      </main>
    </div>

    <footer class="status">
      <span class="s1">X=111055 Y=-11148</span>
      <span class="s2">层高:2.8m</span>
      <span class="s3">底标高:20.35m</span>
      <span class="s4">1(1)</span>
      <span class="s5">按鼠标左键指定第一个角点，或拾取构件图元</span>
      <span class="s6">449.9 FPS</span>
    </footer>

    <div class="taskbar">
      <div class="tb-start"><svg class="win"><use href="#win" /></svg></div>
      <div class="tb-search">
        <i class="cortana" />
        <span>在这里输入你要搜索的内容</span>
        <svg class="ico mic"><use href="#mic" /></svg>
      </div>
      <div class="tb-apps">
        <span v-for="a in taskApps" :key="a.i" class="tb-app" :class="a.cls">
          <svg><use :href="`#${a.i}`" /></svg>
          <svg v-if="a.i === 'swirl'" class="tb-bell"><use href="#bell-o" /></svg>
        </span>
      </div>
      <div class="tb-link">链接</div>
      <div class="tb-cpu"><span>30%</span><span>CPU使用</span></div>
      <div class="tray">
        <svg viewBox="0 0 14 8" class="chevron"><path d="M1 7l6-6 6 6" fill="none" stroke="#fff" /></svg>
        <svg class="ico"><use href="#bell" /></svg>
        <svg class="ico"><use href="#batt" /></svg>
        <svg class="ico"><use href="#wifi" /></svg>
        <svg class="ico"><use href="#vol" /></svg>
        <svg class="kb"><use href="#kb" /></svg>
        <span class="tray-zh">中</span>
        <span class="ime-logo small">S</span>
        <div class="clock"><span>9:30</span><span>2018/8/23</span></div>
        <div class="notes">
          <svg class="ico"><use href="#note" /></svg>
          <b>4</b>
        </div>
      </div>
    </div>
  </div>
</template>

<script setup lang="ts">
import { h } from 'vue'
import type { FunctionalComponent } from 'vue'

interface Tool {
  i?: string
  t?: string
  off?: boolean
  on?: boolean
  caret?: boolean
  sep?: boolean
  sel?: string
  w?: number
}

interface TreeNode {
  label: string
  icon?: string
  open?: boolean
  last?: boolean
  picked?: boolean
}

// one toolbar entry: separator, drop-down box or icon button
const ToolItem: FunctionalComponent<{ item: Tool }> = ({ item }) => {
  if (item.sep) return h('i', { class: 'sep' })
  if (item.sel !== undefined) {
    return h('span', { class: 'select', style: { width: item.w + 'px' } }, [
      h('span', item.sel),
      h('i', { class: 'caret' }),
    ])
  }
  const kids = []
  if (item.i) kids.push(h('svg', { class: 'ico' }, [h('use', { href: '#' + item.i })]))
  if (item.t) kids.push(h('span', item.t))
  if (item.caret) kids.push(h('i', { class: 'caret' }))
  return h('span', { class: ['tool', { off: item.off, on: item.on }] }, kids)
}

const menus = ['文件(F)', '编辑(E)', '楼层(L)', '构件(N)', '绘图(D)', '修改(M)', '钢筋量(Q)', '视图(V)', '工具(T)', '云应用(Y)', 'BIM应用(I)', '在线服务(S)', '帮助(H)', '版本号(B)']
const imeIcons = ['smile', 's-mic', 's-kb', 's-user', 's-shirt', 's-tool']

const quickTools: Tool[] = [
  { i: 'new' },
  { i: 'open', caret: true },
  { i: 'save' },
  { sep: true },
  { i: 'undo', caret: true },
]
const mainTools: Tool[] = [
  { i: 'def', t: '定义' },
  { t: 'Σ 汇总计算' },
  { i: 'cloud', t: '云检查' },
  { i: 'level', t: '平齐板顶', off: true },
  { i: 'find', t: '查找图元' },
  { i: 'glass', t: '查看钢筋量' },
  { i: 'batch', t: '批量选择' },
]
const viewTools: Tool[] = [
  { i: 'cube', t: '三维', caret: true },
  { i: 'top', t: '俯视', caret: true },
  { i: 'orbit', t: '动态观察' },
  { i: 'local', t: '局部三维', off: true },
  { sep: true },
  { i: 'full', t: '全屏' },
  { i: 'zoom', t: '缩放', caret: true },
  { i: 'pan', t: '平移', caret: true },
  { i: 'rotate', t: '屏幕旋转', caret: true, on: true },
  { sep: true },
  { i: 'floors', t: '选择楼层' },
]
const editTools: Tool[] = [
  { i: 'erase', t: '删除' },
  { sep: true },
  { i: 'copy', t: '复制' },
  { i: 'mirror', t: '镜像' },
  { sep: true },
  { i: 'move', t: '移动' },
  { i: 'spin', t: '旋转' },
  { sep: true },
  { i: 'extend', t: '延伸' },
  { i: 'trim', t: '修剪' },
  { sep: true },
  { i: 'break', t: '打断' },
  { i: 'merge', t: '合并' },
  { i: 'split', t: '分割', off: true },
  { sep: true },
  { i: 'align', t: '对齐', caret: true },
  { i: 'offset', t: '偏移' },
  { i: 'stretch', t: '拉伸' },
  { sep: true },
  { i: 'grips', t: '设置夹点', off: true },
]
const attrTools: Tool[] = [
  { sel: '第7层', w: 58 },
  { sel: '自定义', w: 70 },
  { sel: '自定义线', w: 70 },
  { sel: 'ZDYX-31·', w: 69 },
  { sep: true },
  { i: 'prop', t: '属性' },
  { i: 'edit', t: '编辑钢筋', on: true },
  { i: 'list', t: '构件列表' },
  { i: 'pick', t: '拾取构件' },
]
const axisTools: Tool[] = [
  { i: 'two', t: '两点' },
  { i: 'par', t: '平行' },
  { i: 'ang', t: '点角', caret: true },
  { i: 'arcx', t: '三点辅轴', caret: true },
  { i: 'erase', t: '删除辅轴' },
  { i: 'dim', t: '尺寸标注', caret: true },
]
const drawTools: Tool[] = [
  { i: 'cursor', t: '选择', on: true },
  { caret: true },
  { sep: true },
  { i: 'line', t: '直线' },
  { i: 'plen', t: '点加长度' },
  { i: 'arc', t: '三点画弧', caret: true },
  { sel: '', w: 53 },
  { i: 'rect', t: '矩形' },
  { sep: true },
  { i: 'smart', t: '智能布置', caret: true },
]
const snapTools: Tool[] = [
  { i: 'cross', t: '交点' },
  { i: 'perp', t: '垂点', on: true },
  { i: 'mid', t: '中点', on: true },
  { i: 'vertex', t: '顶点' },
  { i: 'coord', t: '坐标' },
]
const rebarTools: Tool[] = [
  { i: 'first' },
  { i: 'prev' },
  { i: 'next' },
  { i: 'last' },
  { sep: true },
  { i: 'up' },
  { i: 'down' },
  { sep: true },
  { i: 'ins', t: '插入', off: true },
  { i: 'del', t: '删除', off: true },
  { i: 'scale', t: '缩尺配筋', off: true },
  { i: 'info', t: '钢筋信息' },
  { i: 'lib', t: '钢筋图库' },
  { i: 'other', t: '其他', caret: true },
  { t: '关闭' },
  { sep: true },
]

const tree: TreeNode[] = [
  { label: '柱' },
  { label: '墙', open: true },
  { label: '剪力墙(Q)', icon: 't-shear' },
  { label: '人防门框墙(RF', icon: 't-door' },
  { label: '砌体墙(Q)', icon: 't-brick' },
  { label: '暗梁(A)', icon: 't-hid' },
  { label: '砌体加筋(Y)', icon: 't-add', last: true },
  { label: '门窗洞' },
  { label: '梁', open: true },
  { label: '梁(L)', icon: 't-beam' },
  { label: '圈梁(E)', icon: 't-ring', last: true },
  { label: '板' },
  { label: '基础', open: true },
  { label: '基础梁(F)', icon: 't-fbeam' },
  { label: '筏板基础(M)', icon: 't-raft' },
  { label: '集水坑(K)', icon: 't-pit' },
  { label: '柱墩(Y)', icon: 't-pier' },
  { label: '筏板主筋(R)', icon: 't-main' },
  { label: '筏板负筋(X)', icon: 't-neg' },
  { label: '独立基础(P)', icon: 't-iso' },
  { label: '条形基础(T)', icon: 't-strip' },
  { label: '桩承台(V)', icon: 't-cap' },
  { label: '承台梁(F)', icon: 't-fbeam' },
  { label: '桩(U)', icon: 't-pile' },
  { label: '基础板带(W)', icon: 't-band', last: true },
  { label: '其它' },
  { label: '自定义', open: true },
  { label: '自定义点', icon: 't-point' },
  { label: '自定义线(X)', icon: 't-line', picked: true },
]

const colWidths = [33, 73, 56, 36, 33, 201, 166, 156, 61, 38, 39, 50, 61, 61, 72, 60]
const headers = ['筋号', '直径(mm)', '级别', '图号', '图形', '计算公式', '公式描述', '长度(mm)', '根数', '搭接', '损耗(%)', '单重(kg)', '总重(kg)', '钢筋归类', '搭接形']

const taskApps = [
  { i: 'taskview', cls: '' },
  { i: 'fan', cls: '' },
  { i: 'ie-w', cls: '' },
  { i: 'swirl', cls: 'split-after' },
  { i: 'edge', cls: '' },
  { i: 'ie', cls: '' },
  { i: 'explorer', cls: '' },
  { i: 'green-e', cls: 'run' },
  { i: 'gswirl', cls: 'run' },
  { i: 'gld', cls: 'active' },
]

const redLines = [
  'M747 168L800 234', 'M660 203L719 275', 'M872 168L890 190', 'M887 168L899 183',
  'M796 368L882 473', 'M878 328L996 473', 'M966 284L1122 473', 'M978 278L1136 473',
  'M1031 251L1209 470', 'M443 330L768 168', 'M895 473L1366 238', 'M996 473L1366 289',
  'M1200 472L1366 391', 'M1207 473L1366 394', 'M1223 473L1366 400', 'M1248 473L1366 414',
  'M1290 473L1366 430', 'M1336 473L1366 458', 'M223 291L372 473', 'M269 255L352 355',
  'M280 251L345 328', 'M355 373L170 467', 'M632 168L719 275', 'M470 451L539 417',
]
</script>

<style scoped>
.app {
  position: relative;
  width: 1366px;
  height: 768px;
  overflow: hidden;
  display: flex;
  flex-direction: column;
  background: #f0f0f0;
  color: #111;
  font: 12px "Noto Sans CJK SC", sans-serif;
}

.sprite {
  position: absolute;
}

.titlebar {
  height: 23px;
  flex: none;
  display: flex;
  align-items: center;
  background: #fff;
}

.app-ico {
  margin: 0 5px 0 2px;
}

.title-text {
  font-size: 13px;
  letter-spacing: -0.22px;
  white-space: nowrap;
}

.win-btns {
  margin-left: auto;
  display: flex;
}

.win-btns svg {
  width: 12px;
  height: 12px;
  margin: 0 16.5px;
}

.menubar {
  height: 31px;
  flex: none;
  display: flex;
  align-items: center;
  padding-left: 2px;
  background: linear-gradient(#f2f2f2, #f8f8f8);
  white-space: nowrap;
}

.menu-item {
  padding: 0 5px;
  font-size: 12px;
}

.news {
  display: flex;
  align-items: center;
  margin-left: 27px;
  gap: 4px;
  width: 150px;
}

.globe {
  margin-left: 17px;
}

.tip {
  width: 188px;
  height: 29px;
  line-height: 29px;
  padding-left: 29px;
  box-sizing: border-box;
  background: #fafafa;
  color: #0f6f74;
}

.account {
  margin-left: 2px;
  width: 197px;
  height: 29px;
  display: flex;
  align-items: center;
  gap: 3px;
  padding-left: 3px;
  box-sizing: border-box;
  background: #fafafa;
  font-size: 13px;
}

.avatar {
  width: 17px;
  height: 17px;
}

.beans {
  margin: 0 6px 0 8px;
}

.more {
  font: 14px "Liberation Sans", sans-serif;
  padding-left: 8px;
  align-self: flex-start;
  margin-top: 1px;
}

.menubar > .more {
  margin-left: 29px;
  margin-top: 3px;
}

.badge {
  position: absolute;
  left: 935px;
  top: -27px;
  width: 46px;
  height: 46px;
  border-radius: 50%;
  background: #3cc04f;
  border: 1px solid #b8c4ba;
  box-shadow: 0 1px 2px rgba(0, 0, 0, 0.4);
  color: #fff;
  font: bold 11px/72px "Liberation Sans", sans-serif;
  text-align: center;
  z-index: 3;
}

.ime {
  position: absolute;
  left: 811px;
  top: 36px;
  width: 193px;
  height: 23px;
  display: flex;
  align-items: center;
  gap: 6px;
  padding-left: 19px;
  box-sizing: border-box;
  background: #f4f7fa;
  border: 1px solid #cfd8df;
  z-index: 3;
}

.ime .ico {
  width: 16px;
  height: 15px;
}

.ime-logo {
  width: 26px;
  height: 26px;
  border-radius: 6px;
  background: #f0501e;
  color: #fff;
  font: italic bold 22px/26px "Liberation Sans", sans-serif;
  text-align: center;
  transform: skewX(-6deg);
}

.ime > .ime-logo {
  position: absolute;
  left: -13px;
  top: -4px;
}

.ime-logo.small {
  width: 15px;
  height: 17px;
  border-radius: 3px;
  font-size: 14px;
  line-height: 17px;
  justify-self: center;
}

.ime-zh {
  color: #1f78d1;
  font-size: 15px;
  font-weight: 700;
}

.ime-dot {
  color: #1f78d1;
  font: bold 14px "Liberation Sans", sans-serif;
  width: 19px;
  text-align: center;
}

.tool-row {
  display: flex;
  flex: none;
  align-items: flex-start;
}

.row-top {
  height: 30px;
}

.row-top .tool-block {
  height: 28px;
}

.tool-block {
  display: flex;
  align-items: center;
  gap: 2px;
  background: linear-gradient(#fbfbfb, #f3f3f3);
  white-space: nowrap;
}

.quick {
  width: 152px;
  flex: none;
  padding-left: 1px;
  box-sizing: border-box;
  gap: 3px;
}

.quick .more,
.mid-tools .more {
  margin-left: auto;
  padding: 0 2px;
}

.mid-tools {
  margin-left: 2px;
  width: 547px;
  flex: none;
  box-sizing: border-box;
}

.view-tools {
  margin-left: 3px;
  flex: 1;
  min-width: 0;
  gap: 1px;
}

.more.end {
  margin-left: auto;
  padding-right: 2px;
}

.workspace {
  flex: 1;
  min-height: 0;
  display: flex;
}

.nav {
  width: 165px;
  flex: none;
  display: flex;
  flex-direction: column;
  gap: 1px;
  margin-right: 5px;
}

.nav-title {
  height: 15px;
  flex: none;
  display: flex;
  align-items: center;
  justify-content: space-between;
  background: #0a58e4;
  color: #fff;
  font-size: 12px;
  padding: 0 4px 0 1px;
}

.nav-ctl {
  display: flex;
  gap: 9px;
}

.nav-ctl svg {
  width: 9px;
  height: 9px;
}

.nav-btn {
  flex: none;
  text-align: center;
  background: #f0f0f0;
  border: 1px solid #9e9e9e;
  border-top-color: #d0d0d0;
  border-left-color: #d0d0d0;
  height: 20px;
  line-height: 20px;
  font-size: 12.500px;
}

.nav-box {
  flex: 1;
  min-height: 0;
  display: flex;
  flex-direction: column;
  border: 1px solid #a0a0a0;
  margin: 0 2px;
  background: #fff;
}

.nav-tools {
  height: 25px;
  flex: none;
  display: flex;
  align-items: center;
  gap: 6px;
  padding-left: 6px;
  border-bottom: 1px solid #bdbdbd;
  box-sizing: border-box;
}

.tree-wrap {
  flex: 1;
  min-height: 0;
  display: flex;
  padding-top: 2px;
}

.tree {
  list-style: none;
  margin: 0;
  padding: 0;
  flex: 1;
  min-width: 0;
  overflow: hidden;
  font-family: "Liberation Serif", "Noto Sans CJK SC", sans-serif;
}

.group,
.leaf {
  height: 16px;
  display: flex;
  align-items: center;
  white-space: nowrap;
}

.chev {
  width: 10px;
  height: 10px;
  margin-left: 7px;
}

.gstub {
  width: 6px;
  border-top: 1px dotted #777;
  margin: 0 1px 0 0;
}

.fold {
  width: 15px;
  height: 14px;
}

.group-label {
  margin-left: 6px;
}

.trunk {
  align-self: stretch;
  width: 18px;
  margin-left: 12px;
  border-left: 1px dotted #777;
}

.stub {
  align-self: flex-start;
  width: 11px;
  height: 8px;
  border-left: 1px dotted #777;
  border-bottom: 1px dotted #777;
  position: relative;
}

.stub:not(.last)::after {
  content: "";
  position: absolute;
  left: -1px;
  top: 8px;
  height: 8px;
  border-left: 1px dotted #777;
}

.leaf-ico {
  display: flex;
  height: 16px;
  width: 15px;
}

.leaf-ico .ico {
  width: 15px;
  height: 15px;
}

.leaf-label {
  margin-left: 5px;
}

.picked {
  background: #d0d0d0;
}

.leaf-label.picked {
  margin-left: 0;
  padding-left: 5px;
}

.cols {
  width: 14px;
  height: 14px;
  margin-left: 1px;
}

.vscroll {
  width: 16px;
  flex: none;
  display: flex;
  flex-direction: column;
  align-items: center;
  background: #f0f0f0;
}

.sc-arrow {
  width: 10px;
  height: 17px;
  flex: none;
}

.vtrack {
  flex: 1;
  width: 100%;
  padding-top: 86px;
  padding-bottom: 31px;
  box-sizing: border-box;
}

.vthumb {
  height: 100%;
  background: #c8c8c8;
}

.hscroll {
  height: 18px;
  flex: none;
  display: flex;
  align-items: center;
  background: #f0f0f0;
}

.hscroll > svg {
  width: 10px;
  height: 10px;
  flex: none;
  margin: 0 3px;
}

.htrack {
  flex: 1;
  height: 100%;
}

.hthumb {
  height: 100%;
  background: #c8c8c8;
}

.nav-h .hthumb {
  width: 102px;
  margin-left: 2px;
}

.main {
  flex: 1;
  min-width: 0;
  display: flex;
  flex-direction: column;
}

.row-edit {
  height: 27px;
}

.row-edit .tool-block {
  height: 26px;
  width: 791px;
  box-sizing: border-box;
}

.row-attr {
  height: 29px;
  padding-left: 2px;
}

.row-attr .tool-block {
  height: 27px;
  padding: 0 4px 0 5px;
}

.row-attr .axis {
  margin-left: 67px;
  padding-left: 0;
  gap: 1px;
}

.row-draw {
  height: 28px;
  padding-left: 12px;
}

.row-draw .tool-block {
  height: 27px;
  padding: 0 30px 0 6px;
}

.canvas {
  display: block;
  width: 1196px;
  height: 305px;
  flex: none;
}

.axis-label {
  fill: #c8c8c8;
  font: 12px "Liberation Sans", sans-serif;
  text-anchor: middle;
}

.snapbar {
  height: 32px;
  flex: none;
  display: flex;
  padding-left: 215px;
  align-items: flex-start;
}

.snap {
  height: 30px;
  padding: 0 10px 0 0;
  gap: 1px;
}

.dim-text {
  color: #8a8a8a;
  margin: 0 2px;
  font-size: 13px;
}

.dim-text.y {
  margin-left: 0;
}

.spin {
  width: 57px;
  height: 22px;
  box-sizing: border-box;
  display: flex;
  align-items: center;
  justify-content: flex-end;
  border: 1px solid #777;
  background: #f6f6f6;
  color: #9a9a9a;
  font: 13px "Noto Sans CJK SC", sans-serif;
}

.spin b {
  font-weight: 400;
  margin-right: 3px;
}

.spin-arrows {
  width: 11px;
  height: 16px;
  background:
    linear-gradient(135deg, transparent 50%, #666 50%) 2px 2px / 3px 3px no-repeat,
    linear-gradient(225deg, transparent 50%, #666 50%) 5px 2px / 3px 3px no-repeat,
    linear-gradient(45deg, transparent 50%, #666 50%) 2px 11px / 3px 3px no-repeat,
    linear-gradient(315deg, transparent 50%, #666 50%) 5px 11px / 3px 3px no-repeat;
}

.check {
  width: 10px;
  height: 10px;
  border: 1px solid #888;
  margin: 0 8px 0 -3px;
  background: #f6f6f6;
}

.rot-label {
  margin-right: 4px;
}

.rebar {
  height: 202px;
  flex: none;
  display: flex;
}

.rebar-side {
  width: 13px;
  flex: none;
  display: flex;
  flex-direction: column;
  padding-top: 2px;
}

.close-ico {
  width: 11px;
  height: 11px;
}

.side-dots {
  flex: 1;
  margin: 3px 4px 6px 1px;
  background: radial-gradient(circle, #bbb 1px, transparent 1px) 0 0 / 4px 4px;
}

.rebar-body {
  flex: 1;
  min-width: 0;
  display: flex;
  flex-direction: column;
}

.rebar-tools {
  height: 28px;
  flex: none;
  display: flex;
  align-items: center;
  gap: 2px;
  background: #f6f6f6;
  white-space: nowrap;
}

.total {
  letter-spacing: 0.1px;
}

.table-box {
  flex: 1;
  min-height: 0;
  display: flex;
  flex-direction: column;
  border-top: 1px solid #a8a8a8;
  border-bottom: 1px solid #a8a8a8;
  background: #fff;
}

.table-clip {
  flex: 1;
  min-height: 0;
  overflow: hidden;
}

.grid {
  table-layout: fixed;
  width: 1196px;
  border-collapse: collapse;
  font-family: "Liberation Serif", "Noto Sans CJK SC", sans-serif;
  font-size: 12px;
  line-height: 14px;
}

.grid th,
.grid td {
  border: 1px solid #c0c0c0;
  padding: 0 2px;
  overflow: hidden;
  white-space: nowrap;
}

.grid thead th {
  height: 18px;
  font-weight: 400;
  background: linear-gradient(#fff, #eee);
  font-size: 12.500px;
}

.grid thead th.hot {
  background: linear-gradient(#fbdc9c, #f2c070);
  color: #7a1a3c;
}

.grid tbody th {
  font-weight: 400;
  background: linear-gradient(#fff, #eee);
}

.grid tbody th.hot-row {
  background: #fdd28a;
  color: #6a1a6a;
}

.r1 td {
  height: 60px;
  background: #ccffd6;
}

.r2 td {
  height: 28px;
  background: #ccffd6;
}

.r3 td,
.r3 th {
  height: 18px;
}

.grid td.teal {
  background: #aae9d7;
}

.grid td.freeze {
  border-left: 1px solid #000;
}

.c {
  text-align: center;
}

.grade {
  width: 12px;
  height: 12px;
  display: inline-block;
  vertical-align: middle;
}

.grid td.fig {
  padding: 0;
}

.fig svg {
  display: block;
  width: 100%;
}

.fig-t {
  font: 11px "Liberation Sans", sans-serif;
}

.fig-t.red {
  fill: #e01818;
}

.grid-h {
  height: 16px;
  margin: 0 0 2px;
}

.grid-h .hthumb {
  width: 824px;
  margin-left: 2px;
}

.status {
  height: 21px;
  flex: none;
  display: flex;
  gap: 2px;
  font-family: "Liberation Serif", "Noto Sans CJK SC", sans-serif;
  background: #f0f0f0;
}

.status span {
  height: 20px;
  line-height: 20px;
  box-sizing: border-box;
  padding-left: 1px;
  border: 1px solid #dcdcdc;
  background: #f6f6f6;
  white-space: nowrap;
}

.s1 { width: 148px; }
.s2 { width: 78px; }
.s3 { width: 98px; }
.s4 { width: 48px; }
.s5 { flex: 1; }
.s6 { width: 70px; }

.taskbar {
  height: 40px;
  flex: none;
  display: flex;
  align-items: center;
  background: #07141c;
  color: #e6e6e6;
}

.tb-start {
  width: 48px;
  height: 100%;
  flex: none;
  display: flex;
  align-items: center;
  justify-content: center;
  background: #000;
}

.win {
  width: 16px;
  height: 16px;
}

.tb-search {
  width: 344px;
  height: 100%;
  flex: none;
  display: flex;
  align-items: center;
  background: #333;
  color: #9a9a9a;
  font-size: 14px;
}

.cortana {
  width: 14px;
  height: 14px;
  margin: 0 6px 0 11px;
  border: 3px solid #d8d8d8;
  border-radius: 50%;
  flex: none;
}

.mic {
  margin-left: auto;
  margin-right: 13px;
}

.tb-apps {
  display: flex;
  height: 100%;
  flex: none;
}

.tb-app {
  position: relative;
  width: 46px;
  height: 100%;
  display: flex;
  align-items: center;
  justify-content: center;
}

.tb-app svg {
  width: 21px;
  height: 21px;
}

.tb-app:nth-child(-n + 4) {
  width: 50.500px;
}

.tb-app.split-after {
  margin-right: 24px;
}

.tb-app.split-after::after {
  content: "";
  position: absolute;
  right: -3px;
  top: 12px;
  height: 16px;
  border-left: 2px solid #3a4247;
}

.tb-app svg.tb-bell {
  position: absolute;
  width: 13px;
  height: 13px;
  left: 25px;
  top: 4px;
}

.tb-app.run::after,
.tb-app.active::after {
  content: "";
  position: absolute;
  left: 4px;
  right: 4px;
  bottom: 0;
  height: 2px;
  background: #76b9ed;
}

.tb-app.active {
  background: #3a4348;
}

.tb-app.active::after {
  left: 0;
  right: 0;
}

.tb-link {
  margin-left: 17px;
  padding-left: 12px;
  border-left: 2px solid #3a4247;
  height: 16px;
  line-height: 16px;
  font-size: 12.500px;
  color: #cfcfcf;
}

.tb-cpu {
  width: 74px;
  margin-left: 7px;
  display: flex;
  flex-direction: column;
  align-items: center;
  font-size: 12px;
  line-height: 18px;
}

.tray {
  margin-left: 8px;
  flex: 1;
  display: grid;
  grid-template-columns: 24px 24px 24px 24px 22px 34px 22px 34px 76px 38px;
  align-items: center;
  justify-items: center;
}

.chevron {
  width: 13px;
  height: 8px;
}

.kb {
  width: 23px;
  height: 15px;
}

.tray-zh {
  font-size: 13px;
}

.clock {
  display: flex;
  flex-direction: column;
  align-items: center;
  font-size: 13px;
  line-height: 19px;
}

.notes {
  position: relative;
}

.notes b {
  position: absolute;
  left: 6px;
  top: 8px;
  width: 15px;
  height: 15px;
  border-radius: 50%;
  background: #333;
  border: 1px solid #777;
  font: bold 11px/15px "Liberation Sans", sans-serif;
  text-align: center;
}
</style>

<style>
/* toolbar entries are rendered by the ToolItem helper, so they sit outside the scope */
.ico {
  width: 16px;
  height: 16px;
  flex: none;
}

.tool {
  display: inline-flex;
  align-items: center;
  gap: 3.500px;
  height: 22px;
  padding: 0 2px;
  box-sizing: border-box;
  border: 1px solid transparent;
  letter-spacing: 0.25px;
  white-space: nowrap;
}

.tool.off {
  color: #a8a8a8;
}

.tool.on {
  background: #cfe4f7;
  border-color: #2a8ad8;
}

.caret {
  width: 0;
  height: 0;
  flex: none;
  border: 3px solid transparent;
  border-top: 4px solid #111;
  border-bottom: 0;
  margin: 0 2px;
  display: inline-block;
}

.sep {
  width: 1px;
  height: 20px;
  background: #c4c4c4;
  flex: none;
}

.row-attr .sep,
.snap .sep {
  margin: 0 3px;
}

.grip {
  width: 3px;
  height: 18px;
  margin: 0 -1px 0 3px;
  flex: none;
  background: radial-gradient(circle, #a0a0a0 1px, transparent 1px) 0 0 / 3px 4px;
}

.select {
  height: 22px;
  padding: 0 2px;
  display: inline-flex;
  align-items: center;
  justify-content: space-between;
  box-sizing: border-box;
  background: #fff;
  flex: none;
  white-space: nowrap;
}
</style>
